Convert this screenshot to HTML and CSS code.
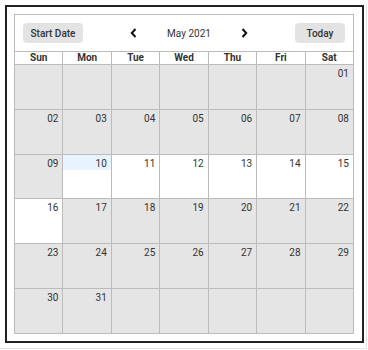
FILE: index.html
```html
<!DOCTYPE html>
<html>
<head>
<meta charset="utf-8">
<link rel="stylesheet" href="styles.css">
</head>
<body>
<div class="page">
  <div class="frame">
    <div class="cal">
      <div class="head">
        <button class="btn btn-start">Start Date</button>
        <div class="nav">
          <svg class="chev" width="7" height="10" viewBox="0 0 7 10"><polyline points="5.5,1 1.8,5 5.5,9" fill="none" stroke="#111" stroke-width="2"/></svg>
          <span class="month">May 2021</span>
          <svg class="chev" width="7" height="10" viewBox="0 0 7 10"><polyline points="1.5,1 5.2,5 1.5,9" fill="none" stroke="#111" stroke-width="2"/></svg>
        </div>
        <button class="btn btn-today">Today</button>
      </div>
      <div class="grid">
        <div class="dn">Sun</div><div class="dn">Mon</div><div class="dn">Tue</div><div class="dn">Wed</div><div class="dn">Thu</div><div class="dn">Fri</div><div class="dn">Sat</div>
        <div class="c"></div><div class="c"></div><div class="c"></div><div class="c"></div><div class="c"></div><div class="c"></div><div class="c">01</div>
        <div class="c">02</div><div class="c">03</div><div class="c">04</div><div class="c">05</div><div class="c">06</div><div class="c">07</div><div class="c">08</div>
        <div class="c">09</div><div class="c sel today"><span class="strip">10</span></div><div class="c sel">11</div><div class="c sel">12</div><div class="c sel">13</div><div class="c sel">14</div><div class="c sel">15</div>
        <div class="c sel">16</div><div class="c">17</div><div class="c">18</div><div class="c">19</div><div class="c">20</div><div class="c">21</div><div class="c">22</div>
        <div class="c">23</div><div class="c">24</div><div class="c">25</div><div class="c">26</div><div class="c">27</div><div class="c">28</div><div class="c">29</div>
        <div class="c">30</div><div class="c">31</div><div class="c"></div><div class="c"></div><div class="c"></div><div class="c"></div><div class="c"></div>
      </div>
    </div>
  </div>
</div>
</body>
</html>
```
FILE: styles.css
```css
html, body {
  margin: 0;
  padding: 0;
  background: #fff;
}
body {
  font-family: Roboto, "Liberation Sans", Arial, sans-serif;
  color: #333;
}
.page {
  width: 366px;
  height: 343px;
  border-right: 1px solid #e2e2e2;
  border-bottom: 1px solid #e2e2e2;
}
.frame {
  margin: 5px;
  border: 2px solid #222;
  padding: 7px 8px 8px 7px;
  box-sizing: border-box;
  width: 359px;
  height: 338px;
}
.cal {
  border: 1px solid #bbb;
  height: 320px;
  box-sizing: border-box;
  display: flex;
  flex-direction: column;
}
.head {
  height: 36px;
  border-bottom: 1px solid #bbb;
  display: flex;
  align-items: center;
  padding: 0 8px;
}
.btn {
  font-family: Roboto, "Liberation Sans", Arial, sans-serif;
  font-size: 10px;
  font-weight: 500;
  color: #333;
  background: #e3e3e3;
  border: none;
  border-radius: 4px;
  height: 20px;
  padding: 0;
  text-align: center;
}
.btn-start {
  width: 60px;
}
.btn-today {
  width: 50px;
}
.nav {
  flex: 1;
  display: flex;
  justify-content: center;
  align-items: center;
  gap: 30px;
}
.month {
  font-size: 10px;
  color: #333;
}
.chev {
  display: block;
}
.grid {
  flex: 1;
  display: grid;
  grid-template-columns: repeat(7, 1fr);
  grid-template-rows: 12px repeat(6, 1fr);
  gap: 1px;
  background: #bbb;
}
.dn {
  background: #fff;
  font-size: 10px;
  font-weight: 700;
  text-align: center;
  line-height: 12px;
  color: #333;
}
.c {
  background: #e5e5e5;
  font-size: 10px;
  text-align: right;
  padding: 3px 4px 0 0;
  line-height: 12px;
  color: #333;
}
.sel {
  background: #fff;
}
.today {
  padding: 0;
}
.strip {
  display: block;
  background: #e8f4fd;
  height: 15px;
  padding: 3px 4px 0 0;
  box-sizing: border-box;
}
```
